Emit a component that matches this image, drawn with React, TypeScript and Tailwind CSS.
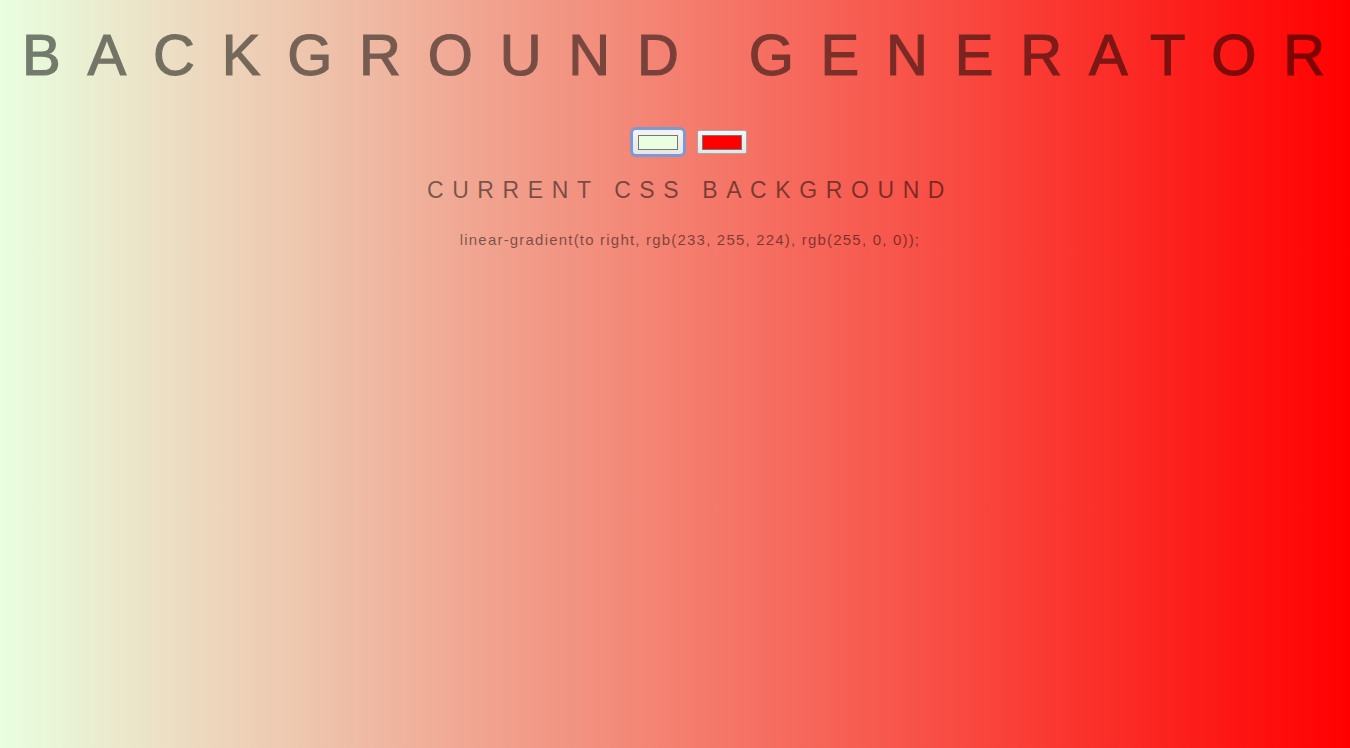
import React from "react";

const ColorBox = ({ color, focused }: { color: string; focused?: boolean }) => {
  return (
    <div
      className={
        focused
          ? "w-[50px] h-[24px] rounded-[3px] bg-gradient-to-b from-[#f4f4f4] to-[#e6e6e6] ring-[3px] ring-[#7d98d3] flex items-center justify-center"
          : "w-[50px] h-[24px] rounded-[2px] border border-[#a8a8a8] bg-gradient-to-b from-[#f4f4f4] to-[#e6e6e6] flex items-center justify-center"
      }
    >
      <div className="w-[40px] h-[15px] border border-[#777777]" style={{ backgroundColor: color }} />
    </div>
  );
};

const App = () => {
  const left = "rgb(233, 255, 224)";
  const right = "rgb(255, 0, 0)";

  return (
    <div className="min-h-screen w-full bg-[linear-gradient(to_right,rgb(233,255,224),rgb(255,0,0))] text-black/50 font-['Liberation_Sans',Arial,sans-serif] overflow-hidden">
      <h1 className="pt-[26px] pl-[22px] whitespace-nowrap text-[58px] leading-none tracking-[26.8px] font-normal text-black opacity-50 [-webkit-text-stroke:1.2px_black]">
        BACKGROUND GENERATO<span className="tracking-normal">R</span>
      </h1>
      <div className="mt-[46px] pl-[30px] flex justify-center gap-[14px]">
        <ColorBox color={left} focused />
        <ColorBox color={right} />
      </div>
      <h3 className="mt-[25px] pl-[30px] text-center text-[23px] leading-none tracking-[8.6px] font-normal">
        CURRENT CSS BACKGROUND
      </h3>
      <p className="mt-[30px] pl-[30px] text-center text-[15px] leading-none tracking-[1.2px]">
        linear-gradient(to right, {left}, {right});
      </p>
    </div>
  );
};

export default App;
